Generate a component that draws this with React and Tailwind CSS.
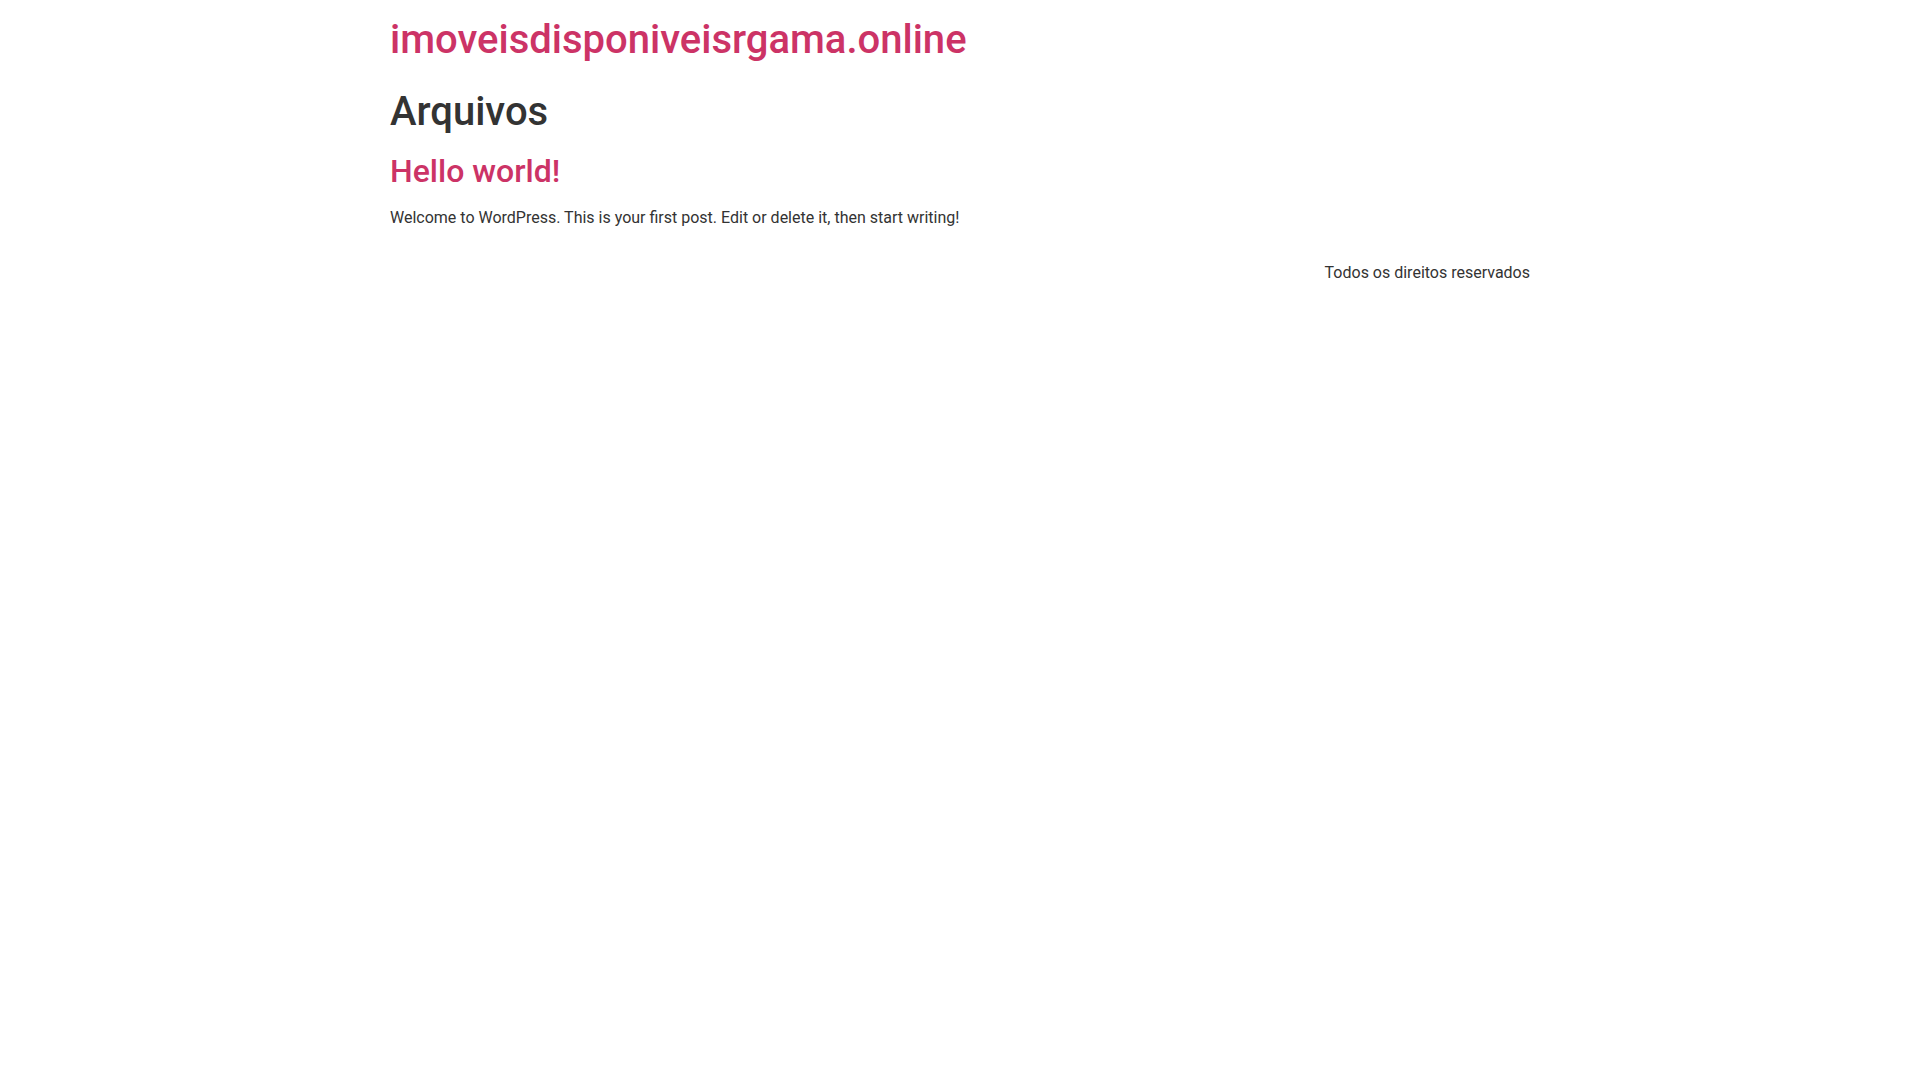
import React from 'react';

// Simple archive page (WordPress-like theme)

const App = () => {
  return (
    <div className="min-h-screen bg-white text-[#333] font-['Roboto','Liberation_Sans',sans-serif] text-base leading-6">
      <div className="max-w-[1140px] mx-auto">
        <header className="pt-4 pb-4">
          <h1 className="m-0 text-[40px] leading-[48px] font-medium">
            <a href="#" className="text-[#cc3366]">imoveisdisponiveisrgama.online</a>
          </h1>
        </header>

        <main>
          <header className="mt-2">
            <h1 className="m-0 text-[40px] leading-[48px] font-medium">Arquivos</h1>
          </header>
          <div className="mt-4">
            <article>
              <h2 className="m-0 text-[32px] leading-[38.4px] font-medium">
                <a href="#" className="text-[#cc3366]">Hello world!</a>
              </h2>
              <p className="mt-4">
                Welcome to WordPress. This is your first post. Edit or delete it, then start writing!
              </p>
            </article>
          </div>
        </main>

        <footer className="mt-[31px] flex justify-end">
          <p>Todos os direitos reservados</p>
        </footer>
      </div>
    </div>
  );
};

export default App;
